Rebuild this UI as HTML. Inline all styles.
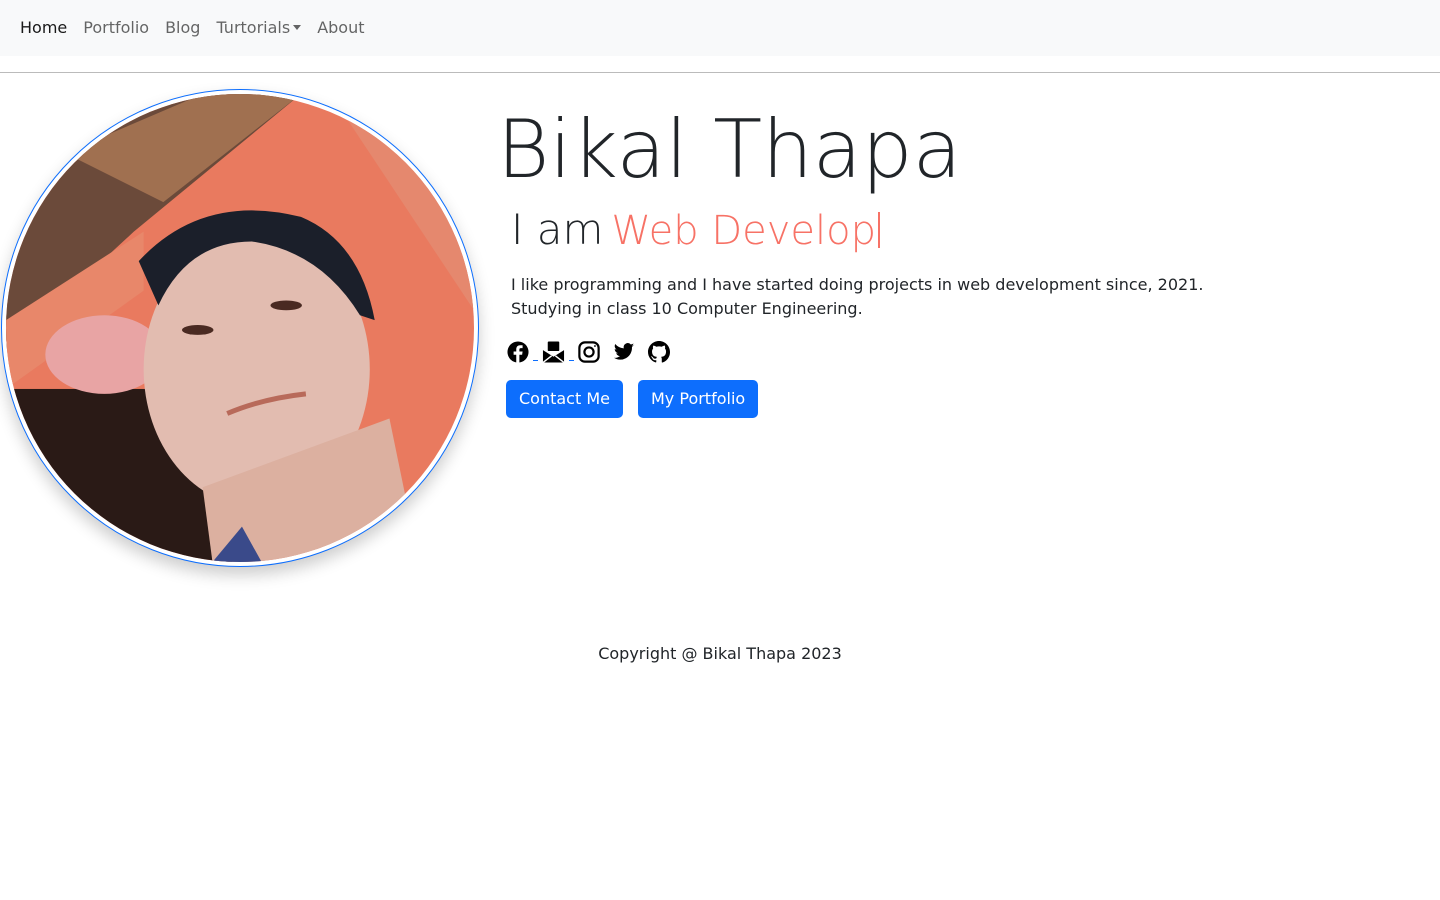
<!DOCTYPE html>
<html><head><meta charset="utf-8"><style>
body{margin:0;font-family:"DejaVu Sans","Liberation Sans",sans-serif;color:#212529;background:#fff;width:1440px;height:900px;position:relative;overflow:hidden}
nav{height:56px;background:#f8f9fa;display:flex;align-items:center;padding-left:20px;font-size:16px}
nav a{color:rgba(0,0,0,.6);margin-right:16px;text-decoration:none;line-height:54px}
nav a.act{color:rgba(0,0,0,.9)}
.caret{display:inline-block;border-top:5px solid rgba(0,0,0,.6);border-left:4px solid transparent;border-right:4px solid transparent;vertical-align:3px;margin-left:3px}
hr{position:absolute;top:72px;left:0;width:1440px;margin:0;border:0;border-top:1px solid #bbb}
.ring{position:absolute;left:1px;top:89px;width:476px;height:476px;border-radius:50%;border:1px solid #0d6efd;box-shadow:0 8px 16px rgba(0,0,0,.2);background:#fff}
.pic{position:absolute;left:4px;top:4px;width:468px;height:468px;border-radius:50%;overflow:hidden}
h1{position:absolute;left:497px;top:103px;margin:0;font-size:80px;font-weight:300;letter-spacing:0}
.iam{position:absolute;left:511px;top:205px;font-size:42px;font-weight:300;white-space:nowrap}
.iam span{color:#f77266;font-size:40px;margin-left:8px}
.iam i{font-style:normal;display:inline-block;width:2px;height:36px;background:#f77266;vertical-align:-4px;margin-left:2px}
p{position:absolute;left:511px;top:273px;margin:0;font-size:16px;line-height:24px}
.icons{position:absolute;left:507px;top:341px;display:flex;gap:13px;align-items:flex-end}
.dash{width:5px;height:1px;background:#0d6efd;margin:0 -9px 0 -9px;position:relative;top:-2px}
.btn{position:absolute;top:380px;height:38px;background:#0d6efd;color:#fff;border-radius:5px;font-size:16px;line-height:38px;padding:0 13px}
.foot{position:absolute;top:644px;width:1440px;text-align:center;font-size:16px}
</style></head><body>
<nav><a class="act">Home</a><a>Portfolio</a><a>Blog</a><a>Turtorials<span class="caret"></span></a><a>About</a></nav>
<hr>
<div class="ring"><div class="pic"><svg width="468" height="468" viewBox="0 0 476 476">
<rect width="476" height="476" fill="#e97a5f"/>
<polygon points="0,0 300,0 130,140 0,260" fill="#6b4a3a"/>
<polygon points="60,60 200,0 300,0 160,110" fill="#a07050"/>
<polygon points="0,230 140,140 140,200 0,300" fill="#e8876a"/>
<rect x="0" y="300" width="230" height="176" fill="#2a1a16"/>
<ellipse cx="100" cy="265" rx="60" ry="40" fill="#e8a4a4"/>
<polygon points="330,0 476,0 476,220" fill="#e5886e"/>
<ellipse cx="255" cy="280" rx="115" ry="140" fill="#e2bcb0"/>
<polygon points="200,400 390,330 420,476 210,476" fill="#dcb0a0"/>
<polygon points="210,476 240,440 260,476" fill="#3a4a8a"/>
<path d="M135 170 Q200 100 300 125 Q360 150 375 230 L360 225 Q320 160 250 150 Q185 150 155 215 Z" fill="#1b1f2a"/>
<ellipse cx="195" cy="240" rx="16" ry="5" fill="#4a2a22"/>
<ellipse cx="285" cy="215" rx="16" ry="5" fill="#4a2a22"/>
<path d="M225 325 Q260 310 305 305" stroke="#b86a5a" stroke-width="5" fill="none"/>
</svg></div></div>
<h1>Bikal Thapa</h1>
<div class="iam">I am<span>Web Develop</span><i></i></div>
<p>I like programming and I have started doing projects in web development since, 2021.<br>Studying in class 10 Computer Engineering.</p>
<div class="icons">
<svg width="22" height="22" viewBox="0 0 24 24"><circle cx="12" cy="12" r="11.5"/><path d="M13.5 24V15h3l.5-3.5h-3.5V9.5c0-1 .3-1.7 1.8-1.7H17V4.7c-.3 0-1.4-.1-2.6-.1-2.6 0-4.3 1.6-4.3 4.4v2.5H7.2V15h2.9v9z" fill="#fff"/></svg>
<span class="dash"></span>
<svg width="23" height="22" viewBox="0 0 24 22"><rect x="6" y="0" width="12" height="10" rx="1"/><path d="M1 9l11 7 11-7v13H1z"/><path d="M1 22l9-7M23 22l-9-7" stroke="#fff" stroke-width="1.5"/></svg>
<span class="dash"></span>
<svg width="22" height="22" viewBox="0 0 24 24" fill="none" stroke="#000" stroke-width="2.4"><rect x="1.5" y="1.5" width="21" height="21" rx="6"/><circle cx="12" cy="12" r="5"/><circle cx="18.5" cy="5.5" r="1" fill="#000" stroke="none"/></svg>
<svg width="22" height="22" viewBox="0 0 24 24"><path d="M23 4.5c-.8.4-1.7.6-2.6.7.9-.6 1.6-1.4 2-2.5-.9.5-1.900.9-2.900 1.1A4.5 4.5 0 0 0 11.8 8C8 7.8 4.7 6 2.5 3.3c-1.2 2-.6 4.6 1.4 6-.7 0-1.4-.2-2-.6 0 2.2 1.5 4.1 3.6 4.5-.7.2-1.4.2-2 .1.6 1.8 2.3 3.1 4.2 3.1A9 9 0 0 1 1 18.3 12.8 12.8 0 0 0 20.7 7v-.6c.9-.6 1.7-1.4 2.3-2.3z"/></svg>
<svg width="22" height="22" viewBox="0 0 16 16"><path d="M8 0C3.58 0 0 3.58 0 8c0 3.54 2.29 6.53 5.47 7.59 0.4 0.07 0.55-0.17 0.55-0.38v-1.33c-2.23 0.48-2.7-1.07-2.7-1.07-0.36-0.92-0.89-1.17-0.89-1.17-0.73-0.5 0.06-0.49 0.06-0.49 0.8 0.06 1.23 0.83 1.23 0.83 0.72 1.23 1.88 0.87 2.34 0.66 0.07-0.52 0.28-0.87 0.51-1.07-1.780-0.2-3.64-0.89-3.64-3.95 0-0.87 0.31-1.59 0.82-2.15-0.08-0.2-0.36-1.02 0.08-2.12 0 0 0.67-0.21 2.2 0.82a7.6 7.6 0 0 1 4 0c1.53-1.04 2.2-0.82 2.2-0.82 0.44 1.1 0.16 1.92 0.08 2.12 0.51 0.56 0.82 1.27 0.82 2.15 0 3.07-1.87 3.75-3.65 3.95 0.29 0.25 0.54 0.73 0.54 1.48v2.2c0 0.21 0.15 0.46 0.55 0.38A8 8 0 0 0 16 8c0-4.42-3.58-8-8-8z"/></svg>
</div>
<div class="btn" style="left:506px">Contact Me</div>
<div class="btn" style="left:638px">My Portfolio</div>
<div class="foot">Copyright @ Bikal Thapa 2023</div>
</body></html>
